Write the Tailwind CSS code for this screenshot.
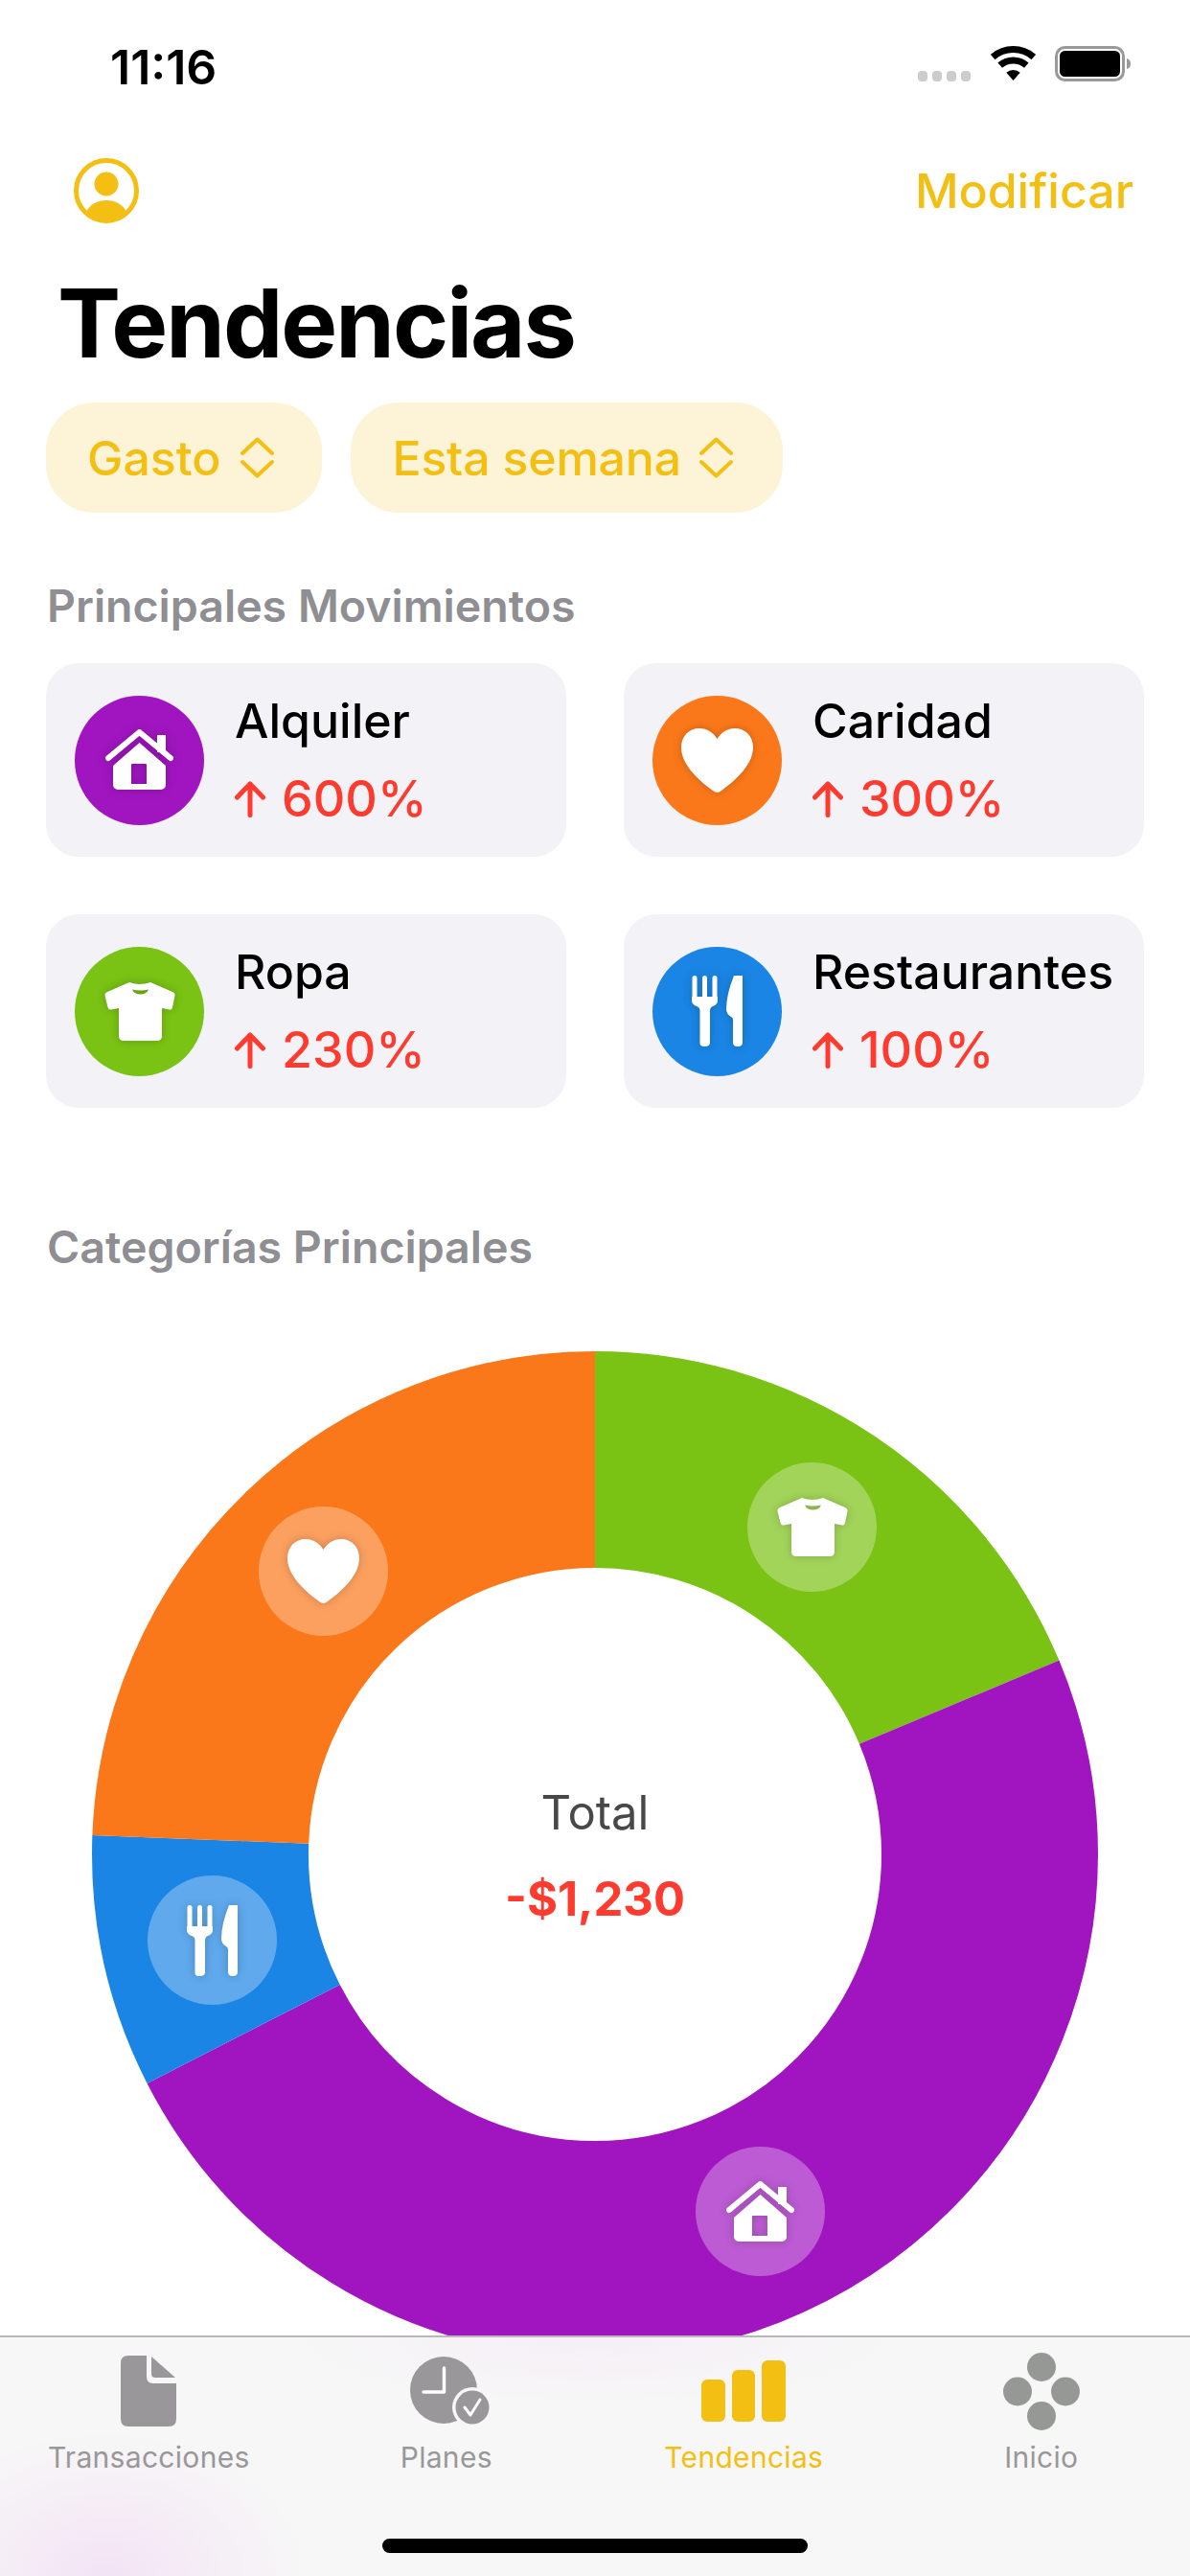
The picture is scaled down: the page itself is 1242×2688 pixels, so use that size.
<!DOCTYPE html>
<html lang="es">
<head>
    <meta charset="UTF-8">
    <meta name="viewport" content="width=device-width, initial-scale=1.0">
    <title>Tendencias</title>
    <script src="https://cdn.jsdelivr.net/npm/@tailwindcss/browser@4"></script>
</head>
<body class="bg-white">
    <!-- shared category icons -->
    <svg class="hidden">
        <symbol id="ic-house" viewBox="0 0 76 64">
            <path fill="#fff" d="M56 6h9v18h-9z"/>
            <path fill="none" stroke="#fff" stroke-width="6" stroke-linecap="round" stroke-linejoin="round" d="M5 30 37.5 3 70 30"/>
            <path fill="#fff" fill-rule="evenodd" d="M37.5 14 65 38v20a5 5 0 0 1-5 5H15a5 5 0 0 1-5-5V38ZM30 36a1 1 0 0 0-1 1v20h16V37a1 1 0 0 0-1-1Z"/>
        </symbol>
        <symbol id="ic-shirt" viewBox="0 0 74 61">
            <path fill="#fff" fill-rule="evenodd" d="M26 0Q37 4 48 0L71 10Q74 11.5 73.5 14L71 26Q70.5 29 68 28.5L60 27V56Q60 61 55 61H20Q15 61 15 56V27L7 28.5Q4 29 3.500 26L.5 14Q0 11.500 3 10ZM29 7.500Q37.500 9.500 46 7.500 44 12.500 37.500 12.500 31 12.500 29 7.500Z"/>
        </symbol>
        <symbol id="ic-heart" viewBox="0 0 75 67">
            <path fill="#fff" d="M37.500 67Q35.500 67 33 65C15 52 0 36 0 20 0 8 8 0 19 0 27 0 33 4 37.500 11 42 4 48 0 56 0 67 0 75 8 75 20 75 36 60 52 42 65Q39.500 67 37.500 67Z"/>
        </symbol>
        <symbol id="ic-food" viewBox="0 0 53 74">
            <g fill="#fff">
                <rect x="0.500" y="0" width="5" height="28" rx="2.500"/>
                <rect x="11" y="0" width="5" height="28" rx="2.500"/>
                <rect x="21.500" y="0" width="5" height="28" rx="2.500"/>
                <path d="M0 22H27V26Q27 30 22 32 19 33 19 37V70Q19 74 13.500 74 8 74 8.500 70V37Q8.500 33 5 32 0 30 0 26Z"/>
                <path d="M53 2V70Q53 74 48 74 43 74 43 70V46Q43 44 41 43 36 40 36 35 36 20 44 0 50.500 0 53 0 53 2 53 2Z"/>
            </g>
        </symbol>
        <symbol id="ic-arrow" viewBox="0 0 32 38">
            <path fill="none" stroke="#ff3b30" stroke-width="5" stroke-linecap="round" stroke-linejoin="round" d="M16 35.500V3M2.500 17 16 3l13.500 14"/>
        </symbol>
        <symbol id="ic-updown" viewBox="0 0 37 43">
            <path fill="none" stroke="#f3bf13" stroke-width="4" stroke-linecap="round" stroke-linejoin="round" d="M3 17 18.500 2.500 34 17M3 26 18.500 40.500 34 26"/>
        </symbol>
    </svg>

    <div class="relative w-[1242px] h-[2688px] overflow-hidden bg-white font-['Inter',sans-serif]">
        <!-- status bar -->
        <div class="h-[132px] flex items-center justify-between pl-[115px] pr-[62px]">
            <span class="mt-[7px] text-[50px] font-semibold leading-none text-black">11:16</span>
            <div class="flex items-center gap-[20px]">
                <svg width="56" height="37" viewBox="0 0 56 37"><g fill="#cccccc"><rect x="0" y="26" width="10" height="11" rx="4"/><rect x="15" y="26" width="10" height="11" rx="4"/><rect x="30" y="26" width="10" height="11" rx="4"/><rect x="45" y="26" width="10" height="11" rx="4"/></g></svg>
                <svg width="47" height="36" viewBox="0 0 47 36">
                    <path fill="none" stroke="#000" stroke-width="7" d="M2.200 11.500A32.500 32.500 0 0 1 44.800 11.500M9.700 20.200A21 21 0 0 1 37.300 20.200"/>
                    <path d="M23.500 36 16.300 27.700A11 11 0 0 1 30.700 27.700Z"/>
                </svg>
                <svg width="79" height="37" viewBox="0 0 79 37">
                    <rect x="1.500" y="1.500" width="70" height="34" rx="9" fill="none" stroke="#999" stroke-width="3"/>
                    <rect x="5" y="5" width="63" height="27" rx="5.500"/>
                    <path fill="#999" d="M75 13q4 1 4 5.500t-4 5.500z"/>
                </svg>
            </div>
        </div>

        <!-- nav bar -->
        <div class="h-[134px] flex items-center justify-between pl-[77px] pr-[59px]">
            <svg width="68" height="68" viewBox="0 0 68 68">
                <circle cx="34" cy="34" r="31.500" fill="none" stroke="#f3bf13" stroke-width="5"/>
                <circle cx="34" cy="27" r="12.500" fill="#f3bf13"/>
                <path fill="#f3bf13" d="M13 56C17 48 25 44 34 44 43 44 51 48 55 56 49 63 42 67 34 67 26 67 19 63 13 56Z"/>
            </svg>
            <span class="text-[50px] font-[550] leading-none text-[#f3bf13]">Modificar</span>
        </div>

        <!-- title -->
        <h1 class="h-[134px] pl-[60px] pt-[8px] flex items-center text-[99px] font-bold leading-none tracking-[-2px] text-black">Tendencias</h1>

        <!-- filters -->
        <div class="mt-[20px] px-[48px] flex gap-[30px]">
            <div class="h-[115px] pl-[43px] pr-[49px] rounded-[50px] bg-[#fdf3d6] flex items-center gap-[20px]">
                <span class="text-[50px] font-[550] leading-none text-[#f3bf13]">Gasto</span>
                <svg class="w-[37px] h-[43px]"><use href="#ic-updown"/></svg>
            </div>
            <div class="h-[115px] pl-[43px] pr-[51px] rounded-[50px] bg-[#fdf3d6] flex items-center gap-[18px]">
                <span class="text-[50px] font-[550] tracking-[-0.2px] leading-none text-[#f3bf13]">Esta semana</span>
                <svg class="w-[37px] h-[43px]"><use href="#ic-updown"/></svg>
            </div>
        </div>

        <!-- top movers -->
        <h2 class="mt-[68px] h-[60px] px-[49px] flex items-center text-[46.500px] font-[560] text-[#8e8e93]">Principales Movimientos</h2>
        <div class="mt-[29px] px-[48px] grid grid-cols-2 gap-x-[60px] gap-y-[60px]">
            <div class="h-[202px] rounded-[34px] bg-[#f2f2f7] pl-[30px] flex items-center gap-[32px]">
                <div class="w-[135px] h-[135px] rounded-full bg-[#a015c0] flex items-center justify-center">
                    <svg class="w-[76px] h-[64px] drop-shadow-[0_0_5px_rgba(0,0,0,0.2)]"><use href="#ic-house"/></svg>
                </div>
                <div class="flex flex-col gap-[28px] pb-[1px]">
                    <span class="text-[50px] font-[550] leading-[54px] text-black">Alquiler</span>
                    <div class="flex items-center gap-[17px]">
                        <svg class="w-[32px] h-[38px]"><use href="#ic-arrow"/></svg>
                        <span class="text-[52px] font-medium leading-[54px] text-[#ff3b30]">600%</span>
                    </div>
                </div>
            </div>
            <div class="h-[202px] rounded-[34px] bg-[#f2f2f7] pl-[30px] flex items-center gap-[32px]">
                <div class="w-[135px] h-[135px] rounded-full bg-[#fb781a] flex items-center justify-center">
                    <svg class="w-[75px] h-[67px] drop-shadow-[0_0_5px_rgba(0,0,0,0.2)]"><use href="#ic-heart"/></svg>
                </div>
                <div class="flex flex-col gap-[28px] pb-[1px]">
                    <span class="text-[50px] font-[550] leading-[54px] text-black">Caridad</span>
                    <div class="flex items-center gap-[17px]">
                        <svg class="w-[32px] h-[38px]"><use href="#ic-arrow"/></svg>
                        <span class="text-[52px] font-medium leading-[54px] text-[#ff3b30]">300%</span>
                    </div>
                </div>
            </div>
            <div class="h-[202px] rounded-[34px] bg-[#f2f2f7] pl-[30px] flex items-center gap-[32px]">
                <div class="w-[135px] h-[135px] rounded-full bg-[#7ac214] flex items-center justify-center">
                    <svg class="w-[74px] h-[61px] drop-shadow-[0_0_5px_rgba(0,0,0,0.2)]"><use href="#ic-shirt"/></svg>
                </div>
                <div class="flex flex-col gap-[28px] pb-[1px]">
                    <span class="text-[50px] font-[550] leading-[54px] text-black">Ropa</span>
                    <div class="flex items-center gap-[17px]">
                        <svg class="w-[32px] h-[38px]"><use href="#ic-arrow"/></svg>
                        <span class="text-[52px] font-medium leading-[54px] text-[#ff3b30]">230%</span>
                    </div>
                </div>
            </div>
            <div class="h-[202px] rounded-[34px] bg-[#f2f2f7] pl-[30px] flex items-center gap-[32px]">
                <div class="w-[135px] h-[135px] rounded-full bg-[#1a85e4] flex items-center justify-center">
                    <svg class="w-[53px] h-[74px] drop-shadow-[0_0_5px_rgba(0,0,0,0.2)]"><use href="#ic-food"/></svg>
                </div>
                <div class="flex flex-col gap-[28px] pb-[1px]">
                    <span class="text-[50px] font-[550] leading-[54px] text-black">Restaurantes</span>
                    <div class="flex items-center gap-[17px]">
                        <svg class="w-[32px] h-[38px]"><use href="#ic-arrow"/></svg>
                        <span class="text-[52px] font-medium leading-[54px] text-[#ff3b30]">100%</span>
                    </div>
                </div>
            </div>
        </div>

        <!-- categories donut -->
        <h2 class="mt-[116px] h-[60px] px-[49px] flex items-center text-[46.500px] font-[560] text-[#8e8e93]">Categorías Principales</h2>
        <div class="relative mt-[78px] ml-[96px] w-[1050px] h-[1050px]">
            <svg class="w-full h-full -rotate-90" viewBox="0 0 1050 1050">
                <g fill="none" stroke-width="226">
                    <circle cx="525" cy="525" r="412" pathLength="1230" stroke="#7ac214" stroke-dasharray="230 1000"/>
                    <circle cx="525" cy="525" r="412" pathLength="1230" stroke="#a015c0" stroke-dasharray="600 630" stroke-dashoffset="-230"/>
                    <circle cx="525" cy="525" r="412" pathLength="1230" stroke="#1a85e4" stroke-dasharray="100 1130" stroke-dashoffset="-830"/>
                    <circle cx="525" cy="525" r="412" pathLength="1230" stroke="#fb781a" stroke-dasharray="300 930" stroke-dashoffset="-930"/>
                </g>
            </svg>
            <div class="absolute inset-0 flex flex-col items-center justify-center gap-[30px] pt-[4px]">
                <span class="text-[49px] leading-[60px] text-[#48484a]">Total</span>
                <span class="text-[49px] font-bold leading-[60px] text-[#ff3b30]">-$1,230</span>
            </div>
            <div class="absolute left-[684px] top-[116px] w-[135px] h-[135px] rounded-full bg-white/30 flex items-center justify-center">
                <svg class="w-[74px] h-[61px] drop-shadow-[0_0_5px_rgba(0,0,0,0.2)]"><use href="#ic-shirt"/></svg>
            </div>
            <div class="absolute left-[630px] top-[830px] w-[135px] h-[135px] rounded-full bg-white/30 flex items-center justify-center">
                <svg class="w-[76px] h-[64px] drop-shadow-[0_0_5px_rgba(0,0,0,0.2)]"><use href="#ic-house"/></svg>
            </div>
            <div class="absolute left-[58px] top-[547px] w-[135px] h-[135px] rounded-full bg-white/30 flex items-center justify-center">
                <svg class="w-[53px] h-[74px] drop-shadow-[0_0_5px_rgba(0,0,0,0.2)]"><use href="#ic-food"/></svg>
            </div>
            <div class="absolute left-[174px] top-[162px] w-[135px] h-[135px] rounded-full bg-white/30 flex items-center justify-center">
                <svg class="w-[75px] h-[67px] drop-shadow-[0_0_5px_rgba(0,0,0,0.2)]"><use href="#ic-heart"/></svg>
            </div>
        </div>

        <!-- tab bar, sits over the chart -->
        <div class="absolute bottom-0 left-0 w-full h-[251px] border-t-[2px] border-[#b8b8b8] bg-[#f7f7f7] bg-[radial-gradient(ellipse_210px_150px_at_110px_100%,#f3e3f5_0%,#f3e3f500_100%),radial-gradient(ellipse_320px_70px_at_620px_0%,#f5eff6_0%,#f5eff600_100%)]">
            <div class="grid grid-cols-4 pt-[15px]">
                <div class="flex flex-col items-center">
                    <div class="h-[82px] flex items-center justify-center">
                        <svg width="58" height="74" viewBox="0 0 58 74">
                            <path fill="#99979a" d="M8 0H27V22Q27 29 34 29H58V66Q58 74 50 74H8Q0 74 0 66V8Q0 0 8 0Z"/>
                            <path fill="#99979a" d="M32 1 57 23H36Q32 23 32 19Z"/>
                        </svg>
                    </div>
                    <span class="mt-[3px] text-[30px] leading-[50px] tracking-[0.3px] text-[#99979a]">Transacciones</span>
                </div>
                <div class="flex flex-col items-center">
                    <div class="h-[82px] flex items-center justify-center">
                        <svg width="90" height="82" viewBox="0 0 90 82">
                            <circle cx="42" cy="40" r="35" fill="#99979a"/>
                            <path fill="none" stroke="#fff" stroke-width="3.500" stroke-linecap="round" stroke-linejoin="round" d="M42.500 17V42H21"/>
                            <circle cx="72" cy="58" r="21" fill="#f7f7f7"/>
                            <circle cx="72" cy="58" r="17.500" fill="#99979a"/>
                            <path fill="none" stroke="#fff" stroke-width="3" stroke-linecap="round" stroke-linejoin="round" d="M64 58 70 66 80 50"/>
                        </svg>
                    </div>
                    <span class="mt-[3px] text-[30px] leading-[50px] tracking-[0.3px] text-[#99979a]">Planes</span>
                </div>
                <div class="flex flex-col items-center">
                    <div class="h-[82px] flex items-center justify-center">
                        <svg width="88" height="64" viewBox="0 0 88 64">
                            <g fill="#f3bf13">
                                <rect x="0" y="20" width="25" height="44" rx="6"/>
                                <rect x="32" y="10" width="24" height="54" rx="6"/>
                                <rect x="63" y="0" width="25" height="64" rx="6"/>
                            </g>
                        </svg>
                    </div>
                    <span class="mt-[3px] text-[30px] leading-[50px] tracking-[0.3px] text-[#f3bf13]">Tendencias</span>
                </div>
                <div class="flex flex-col items-center">
                    <div class="h-[82px] flex items-center justify-center">
                        <svg width="80" height="81" viewBox="0 0 80 81">
                            <g fill="#969896">
                                <circle cx="40" cy="15" r="15"/>
                                <circle cx="15" cy="40.500" r="15"/>
                                <circle cx="65" cy="40.500" r="15"/>
                                <circle cx="40" cy="66" r="15"/>
                            </g>
                        </svg>
                    </div>
                    <span class="mt-[3px] text-[30px] leading-[50px] tracking-[0.3px] text-[#99979a]">Inicio</span>
                </div>
            </div>
            <div class="absolute left-[399px] bottom-[24px] w-[444px] h-[15px] rounded-full bg-black"></div>
        </div>
    </div>
</body>
</html>
